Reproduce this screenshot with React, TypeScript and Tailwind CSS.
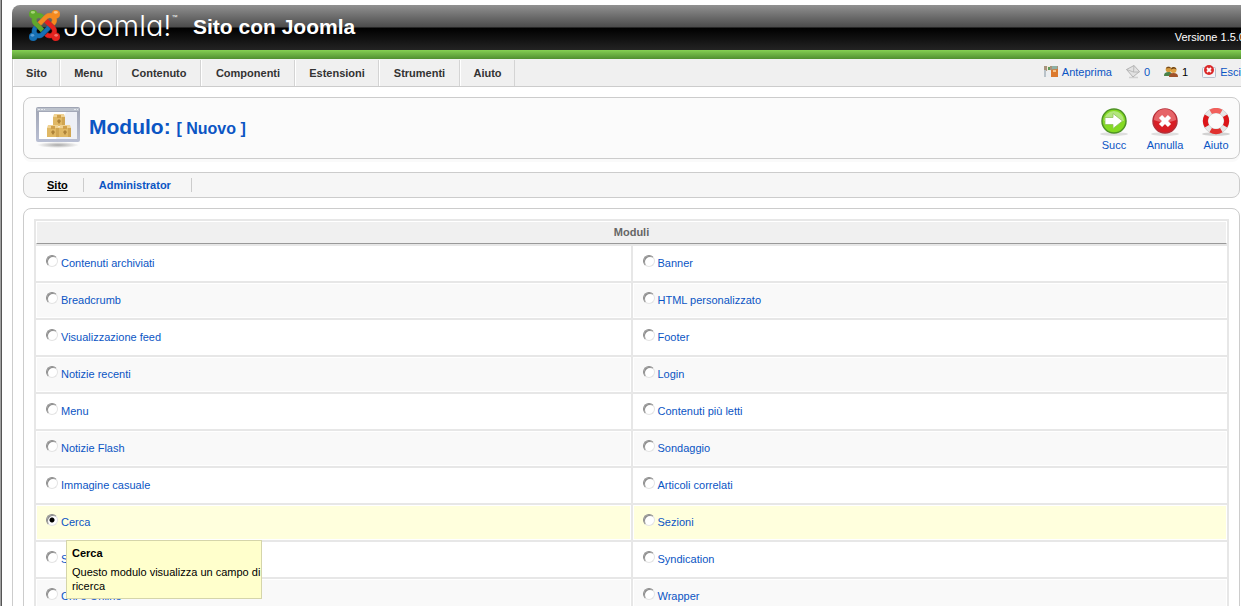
import { useState } from 'react';

const menuItems = [
  { label: 'Sito', width: 'w-[47px]' },
  { label: 'Menu', width: 'w-[57px]' },
  { label: 'Contenuto', width: 'w-[84px]' },
  { label: 'Componenti', width: 'w-[94px]' },
  { label: 'Estensioni', width: 'w-[84px]' },
  { label: 'Strumenti', width: 'w-[81px]' },
  { label: 'Aiuto', width: 'w-[55px]' },
];

const moduleRows = [
  ['Contenuti archiviati', 'Banner'],
  ['Breadcrumb', 'HTML personalizzato'],
  ['Visualizzazione feed', 'Footer'],
  ['Notizie recenti', 'Login'],
  ['Menu', 'Contenuti più letti'],
  ['Notizie Flash', 'Sondaggio'],
  ['Immagine casuale', 'Articoli correlati'],
  ['Cerca', 'Sezioni'],
  ['Statistiche', 'Syndication'],
  ['Chi è Online', 'Wrapper'],
];

const JoomlaMark = () => (
  <svg className="size-[31px]" viewBox="0 32 448 448" aria-hidden="true">
    <g strokeWidth="8">
      <path
        fill="#5fa82c"
        stroke="#5fa82c"
        d="M.6 92.1C.6 58.8 27.4 32 60.4 32c30 0 54.5 21.9 59.2 50.2 32.6-7.6 67.1.6 96.5 30l-44.3 44.3c-20.5-20.5-42.6-16.3-55.4-3.5-14.3 14.3-14.3 37.9 0 52.2l99.5 99.5-44 44.3c-87.7-87.2-49.7-49.7-99.8-99.7-26.8-26.5-35-64.8-24.8-98.9C20.4 144.6.6 120.7.6 92.1z"
      />
      <path
        fill="#f58a1f"
        stroke="#f58a1f"
        d="M130.1 208.5l44.3 44.3c10-10 89.7-89.7 99.7-99.8 14.3-14.3 37.6-14.3 51.9 0 12.8 12.8 17 35-3.5 55.4l44 44.3c31.2-31.2 38.5-67.6 28.9-101.2 29.2-4.1 51.9-29.2 51.9-59.5 0-33.2-26.8-60.1-59.8-60.1-30.3 0-55.4 22.5-59.5 51.6-33.8-9.9-71.7-1.5-98.3 25.1-18.3 19.1-71.1 71.5-99.6 99.9z"
      />
      <path
        fill="#e5231f"
        stroke="#e5231f"
        d="M396.4 360.7c8.2-32.7-.9-68.5-26.3-93.9-11.8-12.2 5 4.7-99.5-99.7l-44.3 44.3 99.7 99.7c14.3 14.3 14.3 37.6 0 51.9-12.8 12.8-35 17-55.4-3.5l-44 44.3c27.6 30.2 68 38.8 102.7 28 5.5 27.4 29.7 48.1 58.9 48.1 33 0 59.8-26.8 59.8-60.1 0-30.2-22.5-55-51.6-59.1z"
      />
      <path
        fill="#1670b4"
        stroke="#1670b4"
        d="M312.1 307.6l-44-44.3c-87 86.4-50.4 50.4-99.7 99.8-14.3 14.3-37.6 14.3-51.9 0-13.1-13.4-16.9-35.3 3.2-55.4l-44-44.3c-30.2 30.2-38 65.2-29.5 98.3-26.7 6-46.2 29.9-46.2 58.2C0 453.2 26.8 480 59.8 480c28.6 0 52.5-19.8 58.6-46.7 32.7 8.2 68.5-.6 94.2-26 32.1-32 12.2-12.4 99.5-99.7z"
      />
    </g>
    <ellipse cx="56" cy="66" rx="32" ry="20" fill="#a5d576" />
    <ellipse cx="386" cy="66" rx="32" ry="20" fill="#fcc484" />
    <ellipse cx="50" cy="398" rx="26" ry="20" fill="#5a9fd6" />
    <ellipse cx="392" cy="398" rx="26" ry="20" fill="#f2756c" />
  </svg>
);

const PreviewIcon = () => (
  <svg className="size-[14px]" viewBox="0 0 14 14" aria-hidden="true">
    <rect x="0" y="1" width="14" height="8" fill="#a8937c" />
    <rect x="3" y="1" width="3" height="8" fill="#f3ead8" />
    <rect x="4" y="2" width="2" height="3" fill="#5f9a5a" />
    <rect x="8" y="1" width="5" height="3" fill="#8fb0a4" />
    <path d="M0 5h2v7H0z" fill="#b9c2c8" />
    <path d="M2 6l5-1v7H2z" fill="#eceef0" />
    <path d="M7 5l7-1v8H7z" fill="#dc7a2e" />
    <path d="M9 5h3v2H9z" fill="#f4c48a" />
  </svg>
);

const MailIcon = () => (
  <svg className="size-[14px]" viewBox="0 0 14 14" aria-hidden="true">
    <path d="M3 12.500h9" stroke="#d2d2d2" strokeWidth="1.500" />
    <path d="M.500 4.500L8 .500l5.500 6L7 12z" fill="#e2e2e2" stroke="#a6a6a6" strokeWidth=".8" />
    <path d="M.500 4.500l7 2.500L8 .500M7.500 7h6" fill="none" stroke="#b0b0b0" strokeWidth=".8" />
  </svg>
);

const UsersIcon = () => (
  <svg className="size-[14px]" viewBox="0 0 14 14" aria-hidden="true">
    <circle cx="4.500" cy="4.500" r="2.800" fill="#d59a3c" />
    <path d="M0 11c0-3 1.500-4 4.500-4S8 8 8 11z" fill="#4a8248" />
    <path d="M2 3.500c0-2.500 5-2.500 5 0L5 3z" fill="#7a4d1c" />
    <circle cx="9.500" cy="5" r="3" fill="#e0a344" />
    <path d="M5 12c0-3 1.500-4 4.500-4s4.500 1 4.500 4z" fill="#a0522a" />
    <path d="M7 4.500c0-3.500 5-3.500 5.500 0L10 3.500z" fill="#6b4318" />
  </svg>
);

const LogoutIcon = () => (
  <svg className="size-[14px]" viewBox="0 0 14 14" aria-hidden="true">
    <rect x=".5" y="2.500" width="13" height="10" rx="1" fill="#f4f5f8" stroke="#b9bfcc" />
    <circle cx="7" cy="5" r="5" fill="#db2a2a" />
    <path d="M5 3l4 4M9 3L5 7" stroke="#fff" strokeWidth="1.800" />
  </svg>
);

// Window frame with the stacked boxes
const ModuleIcon = () => (
  <svg className="h-[42px] w-11 shrink-0" viewBox="0 0 44 42" aria-hidden="true">
    <defs>
      <linearGradient id="frame" x1="0" y1="0" x2="0" y2="1">
        <stop offset="0" stopColor="#a0a5b4" />
        <stop offset="1" stopColor="#b9bfd3" />
      </linearGradient>
      <radialGradient id="floor">
        <stop offset="0" stopColor="#a8a8a8" />
        <stop offset="1" stopColor="#fbfbfb" />
      </radialGradient>
    </defs>
    <ellipse cx="22" cy="38" rx="21" ry="3" fill="url(#floor)" />
    <rect x="0" y="0" width="44" height="35" rx="2" fill="url(#frame)" />
    <rect x="1" y="1" width="42" height="3" fill="#bcc2cc" />
    <path d="M2 2.500h7M38 2.500h4" stroke="#e6e8ee" strokeDasharray="2 1" />
    <rect x="3" y="5" width="38" height="27" fill="#fff" />
    <path d="M30 5h11v27H20z" fill="#eef0f6" />
    {[
      [17, 7],
      [11, 18],
      [23, 18],
    ].map(([x, y]) => (
      <g key={`${x}-${y}`} transform={`translate(${x} ${y})`}>
        <path d="M1 0h10l1 3H0z" fill="#f0d293" />
        <rect x="0" y="3" width="12" height="9" fill="#e0b865" />
        <path d="M9 3h3v9H9z" fill="#d0a552" />
        <path d="M4 1h4v3H4z" fill="#cfa04c" />
        <path d="M6 5l2 2-2 3-2-3z" fill="#ad8238" />
      </g>
    ))}
  </svg>
);

const NextIcon = () => (
  <svg className="h-7 w-[30px]" viewBox="0 0 30 28" aria-hidden="true">
    <ellipse cx="15" cy="26" rx="14" ry="1.800" fill="#dedede" />
    <circle cx="15" cy="13" r="12" fill="#84da22" stroke="#4f9326" strokeWidth="1.500" />
    <path d="M5 13a10 10 0 0 1 20 0z" fill="#b2e67c" />
    <path d="M6 9.500h8V5.500l9.500 7.500-9.500 7.500v-4H6z" fill="#fff" stroke="#8fbf5c" strokeWidth=".8" />
  </svg>
);

const CancelIcon = () => (
  <svg className="h-7 w-[30px]" viewBox="0 0 30 28" aria-hidden="true">
    <ellipse cx="15" cy="26" rx="14" ry="1.800" fill="#dedede" />
    <circle cx="15" cy="13" r="12" fill="#d81e25" stroke="#b3303a" strokeWidth="1.500" />
    <path d="M4 12a11 11 0 0 1 22 0c-7 3-15 3-22 0z" fill="#e66468" />
    <path d="M10.500 8.500l9 9M19.500 8.500l-9 9" stroke="#fff" strokeWidth="4.500" />
  </svg>
);

const HelpIcon = () => (
  <svg className="h-7 w-[30px]" viewBox="0 0 30 28" aria-hidden="true">
    <ellipse cx="15" cy="26" rx="14" ry="1.800" fill="#d2d2d2" />
    <circle cx="15" cy="13" r="10.500" fill="none" stroke="#c4c4c4" strokeWidth="5.500" />
    <circle cx="15" cy="13" r="10.500" fill="none" stroke="#e6e6e6" strokeWidth="4.500" />
    <g fill="none" strokeWidth="5">
      <path d="M9.700 3.900a10.500 10.500 0 0 1 10.600 0" stroke="#f2605c" />
      <path d="M24.100 7.700a10.500 10.500 0 0 1 0 10.600" stroke="#dc1519" />
      <path d="M20.300 22.100a10.500 10.500 0 0 1-10.600 0" stroke="#e0312f" />
      <path d="M5.900 18.300a10.500 10.500 0 0 1 0-10.600" stroke="#dc1519" />
    </g>
  </svg>
);

const toolbar = [
  { label: 'Succ', Icon: NextIcon },
  { label: 'Annulla', Icon: CancelIcon },
  { label: 'Aiuto', Icon: HelpIcon },
];

const Header = () => (
  <header className="-mr-2">
    <div className="flex h-[45px] justify-between rounded-tl-lg bg-[linear-gradient(#919191_0,#4b4b4b_22px,#000_23px,#232323_100%)] text-white">
      <div className="flex items-start pt-[5px] pl-[17px]">
        <JoomlaMark />
        <div className="flex w-[133px] items-start pl-[3px]">
          <span className="font-[Inter] text-[29px] leading-[32px] font-light [font-feature-settings:'cv11']">
            Joomla!
          </span>
          <span className="text-[6px] leading-[14px]">™</span>
        </div>
        <h1 className="text-[21px] leading-[34px] font-bold whitespace-nowrap">Sito con Joomla</h1>
      </div>
      <span className="self-end pr-1 pb-[6px] whitespace-nowrap">Versione 1.5.0</span>
    </div>
    <div className="h-[9px] bg-linear-to-b from-[#85d053] to-[#508f30]" />
  </header>
);

const MenuBar = () => (
  <div className="-mr-2 flex h-7 justify-between border-b border-l border-[#ccc] bg-[#f0f0f0] pr-2">
    <nav className="flex pt-px">
      {menuItems.map((item) => (
        <a
          key={item.label}
          href="#"
          className={`${item.width} border-r border-l border-l-white border-r-[#d4d4d4] text-center leading-[26px] font-bold text-[#333]`}
        >
          {item.label}
        </a>
      ))}
    </nav>
    <div className="flex items-center gap-[14px] pb-px text-[#0b55c4]">
      <a href="#" className="flex items-center gap-1">
        <PreviewIcon /> Anteprima
      </a>
      <a href="#" className="flex items-center gap-1">
        <MailIcon /> 0
      </a>
      <span className="flex items-center gap-1 text-black">
        <UsersIcon /> 1
      </span>
      <a href="#" className="flex items-center gap-1">
        <LogoutIcon /> Esci
      </a>
    </div>
  </div>
);

interface ModuleCellProps {
  name: string;
  selected: string;
  striped: boolean;
  onSelect: (name: string) => void;
}

const ModuleCell = ({ name, selected, striped, onSelect }: ModuleCellProps) => (
  <td className={`relative h-[35px] border border-white p-0 ${striped ? 'bg-[#f9f9f9]' : 'bg-white'} group-has-checked:bg-[#ffffdd]`}>
    <label className="flex items-center gap-[3px] pb-[2px] pl-[9px] leading-[14px] text-[#0b55c4]">
      <input
        type="radio"
        name="module"
        checked={selected === name}
        onChange={() => onSelect(name)}
        className="mb-1 size-3 appearance-none rounded-full border border-t-[#8c8c8c] border-r-[#e4e4e4] border-b-[#e4e4e4] border-l-[#8c8c8c] bg-white shadow-[inset_1px_1px_0_#8c8c8c] checked:bg-[radial-gradient(circle,#000_2px,transparent_3px)]"
      />
      {name}
    </label>
    {name === 'Cerca' && (
      <div
        role="tooltip"
        className="absolute top-[34px] left-[29px] z-10 w-[196px] border border-[#d5d5aa] bg-[#ffffcc] py-[5px] pl-[5px] leading-[14px] text-black"
      >
        <strong className="mb-[5px] block">Cerca</strong>
        Questo modulo visualizza un campo di ricerca
      </div>
    )}
  </td>
);

export default function App() {
  const [selected, setSelected] = useState('Cerca');

  return (
    <div className="flex h-screen overflow-hidden bg-white font-['Liberation_Sans',Arial,sans-serif] text-[11px] leading-[14px]">
      <div className="w-[2px] shrink-0 border-r border-[#555] bg-[#a0a0a0]" />
      <div className="min-w-0 flex-1 pt-[5px] pl-[10px]">
        <Header />
        <MenuBar />
        <main className="border-l border-[#ccc] pt-[10px] pr-px pl-[10px]">
          <section className="flex h-[62px] justify-between rounded-lg border border-[#ccc] bg-[#fbfbfb] pl-3 shadow-[0_3px_0_#fafafa]">
            <div className="flex items-center gap-[9px]">
              <ModuleIcon />
              <h2 className="text-[21px] leading-6 font-bold whitespace-nowrap text-[#0b55c4]">
                Modulo: <small className="text-base leading-6">[ Nuovo ]</small>
              </h2>
            </div>
            <div className="-mr-px flex gap-[3px] pt-[10px]">
              {toolbar.map(({ label, Icon }) => (
                <button key={label} type="button" className="flex w-12 flex-col items-center gap-[2px] text-[#0b55c4]">
                  <Icon />
                  {label}
                </button>
              ))}
            </div>
          </section>

          <nav className="mt-[13px] flex h-[26px] items-center rounded-lg border border-[#ccc] bg-[#f6f6f6] pl-2 font-bold text-[#0b55c4]">
            <a href="#" className="border-r border-[#ccc] px-[15px] text-black underline">
              Sito
            </a>
            <a href="#" className="w-[108px] border-r border-[#ccc] pl-[15px]">
              Administrator
            </a>
          </nav>

          <section className="mt-[10px] rounded-lg border border-[#ccc] p-[10px]">
            <table className="w-full table-fixed border-separate border-spacing-[2px] bg-[#e7e7e7]">
              <thead>
                <tr>
                  <th colSpan={2} className="h-[23px] border border-white border-b-[#999] bg-[#f0f0f0] p-0 pb-[2px] text-[#666]">
                    Moduli
                  </th>
                </tr>
              </thead>
              <tbody>
                {moduleRows.map((row, i) => (
                  <tr key={row[0]} className="group">
                    {row.map((name) => (
                      <ModuleCell
                        key={name}
                        name={name}
                        selected={selected}
                        striped={i % 2 === 1}
                        onSelect={setSelected}
                      />
                    ))}
                  </tr>
                ))}
              </tbody>
            </table>
          </section>
        </main>
      </div>
    </div>
  );
}
